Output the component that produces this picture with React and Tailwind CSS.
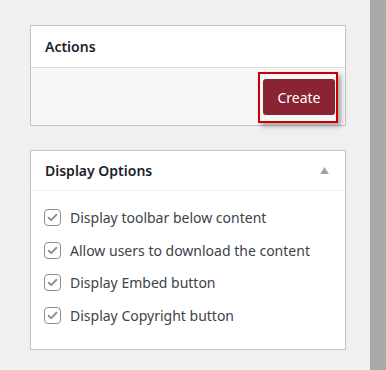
import React from 'react';

const options = [
  'Display toolbar below content',
  'Allow users to download the content',
  'Display Embed button',
  'Display Copyright button',
];

const CheckBox = () => (
  <span className="w-[17px] h-[17px] shrink-0 rounded-[4px] border border-[#8c8f94] bg-white flex items-center justify-center">
    <svg viewBox="0 0 16 16" className="w-[13px] h-[13px]">
      <path d="M3.2 8.3 L6.4 11.3 L12.8 4.6" fill="none" stroke="#8a8e94" strokeWidth="2.3" strokeLinecap="round" strokeLinejoin="round" />
    </svg>
  </span>
);

export default function App() {
  return (
    <div className="w-[386px] h-[370px] bg-[#f0f0f1] flex overflow-hidden" style={{ fontFamily: '"Noto Sans", "Open Sans", sans-serif' }}>
      <div className="w-[370px] pl-[30px] pt-[25px] flex flex-col gap-[24px]">
        {/* Actions */}
        <section className="w-[316px] border border-[#c3c4c7] bg-white">
          <div className="h-[42px] px-[14px] flex items-center border-b border-[#dcdcde]">
            <h2 className="text-[14px] font-semibold text-[#1d2327]">Actions</h2>
          </div>
          <div className="h-[57px] bg-[#f6f7f7] flex items-start justify-end pt-[4px] pr-[7px]">
            <div className="border-2 border-[#c00] pt-[5px] pb-[6px] pl-[3px] pr-px shadow-[3px_3px_5px_rgba(0,0,0,0.35)]">
              <button className="h-9 w-[72px] rounded-[3px] bg-[#8a2432] text-white text-[14px] flex items-center justify-center">
                Create
              </button>
            </div>
          </div>
        </section>

        {/* Display Options */}
        <section className="w-[316px] h-[200px] border border-[#c3c4c7] bg-white">
          <div className="h-[40px] pl-[14px] pr-[16px] flex items-center justify-between border-b border-[#f0f0f1]">
            <h2 className="text-[14px] font-semibold text-[#1d2327]">Display Options</h2>
            <svg viewBox="0 0 10 8" className="w-[9px] h-[7px]">
              <path d="M5 0 L10 8 L0 8 Z" fill="#9ea3a8" />
            </svg>
          </div>
          <ul className="pt-[18px] pl-[13px] flex flex-col gap-[15.5px]">
            {options.map((label) => (
              <li key={label} className="flex items-center gap-[9px] h-[17px]">
                <CheckBox />
                <span className="text-[14px] text-[#3c434a] whitespace-nowrap">{label}</span>
              </li>
            ))}
          </ul>
        </section>
      </div>
      <div className="w-4 h-full bg-[#a8a8a8]" />
    </div>
  );
}
